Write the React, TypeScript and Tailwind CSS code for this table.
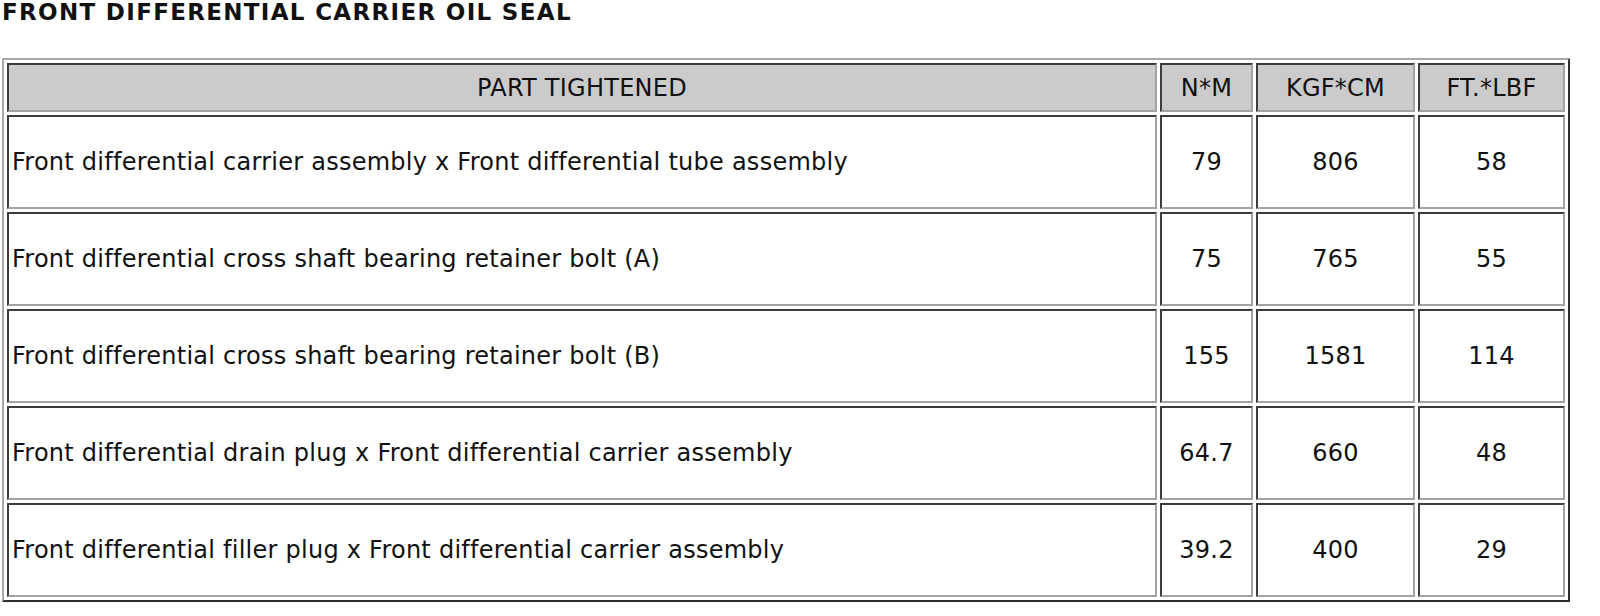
import React from 'react'

interface TorqueRow {
  part: string
  nm: string
  kgf: string
  ft: string
}

const ROWS: TorqueRow[] = [
  { part: 'Front differential carrier assembly x Front differential tube assembly', nm: '79', kgf: '806', ft: '58' },
  { part: 'Front differential cross shaft bearing retainer bolt (A)', nm: '75', kgf: '765', ft: '55' },
  { part: 'Front differential cross shaft bearing retainer bolt (B)', nm: '155', kgf: '1581', ft: '114' },
  { part: 'Front differential drain plug x Front differential carrier assembly', nm: '64.7', kgf: '660', ft: '48' },
  { part: 'Front differential filler plug x Front differential carrier assembly', nm: '39.2', kgf: '400', ft: '29' },
]

// inset look of classic border="1" cells
const cell =
  'border-2 border-t-[#3c3c3c] border-l-[#3c3c3c] border-r-[#a3a3a3] border-b-[#a3a3a3] px-[3px]'

const App: React.FC = () => {
  return (
    <div className="bg-white min-h-[616px] text-[#111] font-['DejaVu_Sans',Verdana,sans-serif]">
      <h1 className="pl-[2px] text-[23px] leading-[24px] tracking-[1.32px] font-bold">FRONT DIFFERENTIAL CARRIER OIL SEAL</h1>

      <table className="mt-[34px] ml-[2px] w-[1568px] table-fixed border-separate border-spacing-[3px] border-2 border-t-[#a8a8a8] border-l-[#a8a8a8] border-r-[#2e2e2e] border-b-[#2e2e2e] text-[24px] tracking-[0.25px]">
        <thead>
          <tr className="h-[49px]">
            <th className={`${cell} w-[1150px] bg-[#cbcbcb] font-normal text-center`}>PART TIGHTENED</th>
            <th className={`${cell} w-[93px] bg-[#cbcbcb] font-normal text-center`}>N*M</th>
            <th className={`${cell} w-[159px] bg-[#cbcbcb] font-normal text-center`}>KGF*CM</th>
            <th className={`${cell} w-[147px] bg-[#cbcbcb] font-normal text-center`}>FT.*LBF</th>
          </tr>
        </thead>
        <tbody>
          {ROWS.map((r) => (
            <tr key={r.part} className="h-[94px]">
              <td className={`${cell} text-left`}>{r.part}</td>
              <td className={`${cell} text-center`}>{r.nm}</td>
              <td className={`${cell} text-center`}>{r.kgf}</td>
              <td className={`${cell} text-center`}>{r.ft}</td>
            </tr>
          ))}
        </tbody>
      </table>
    </div>
  )
}

export default App
